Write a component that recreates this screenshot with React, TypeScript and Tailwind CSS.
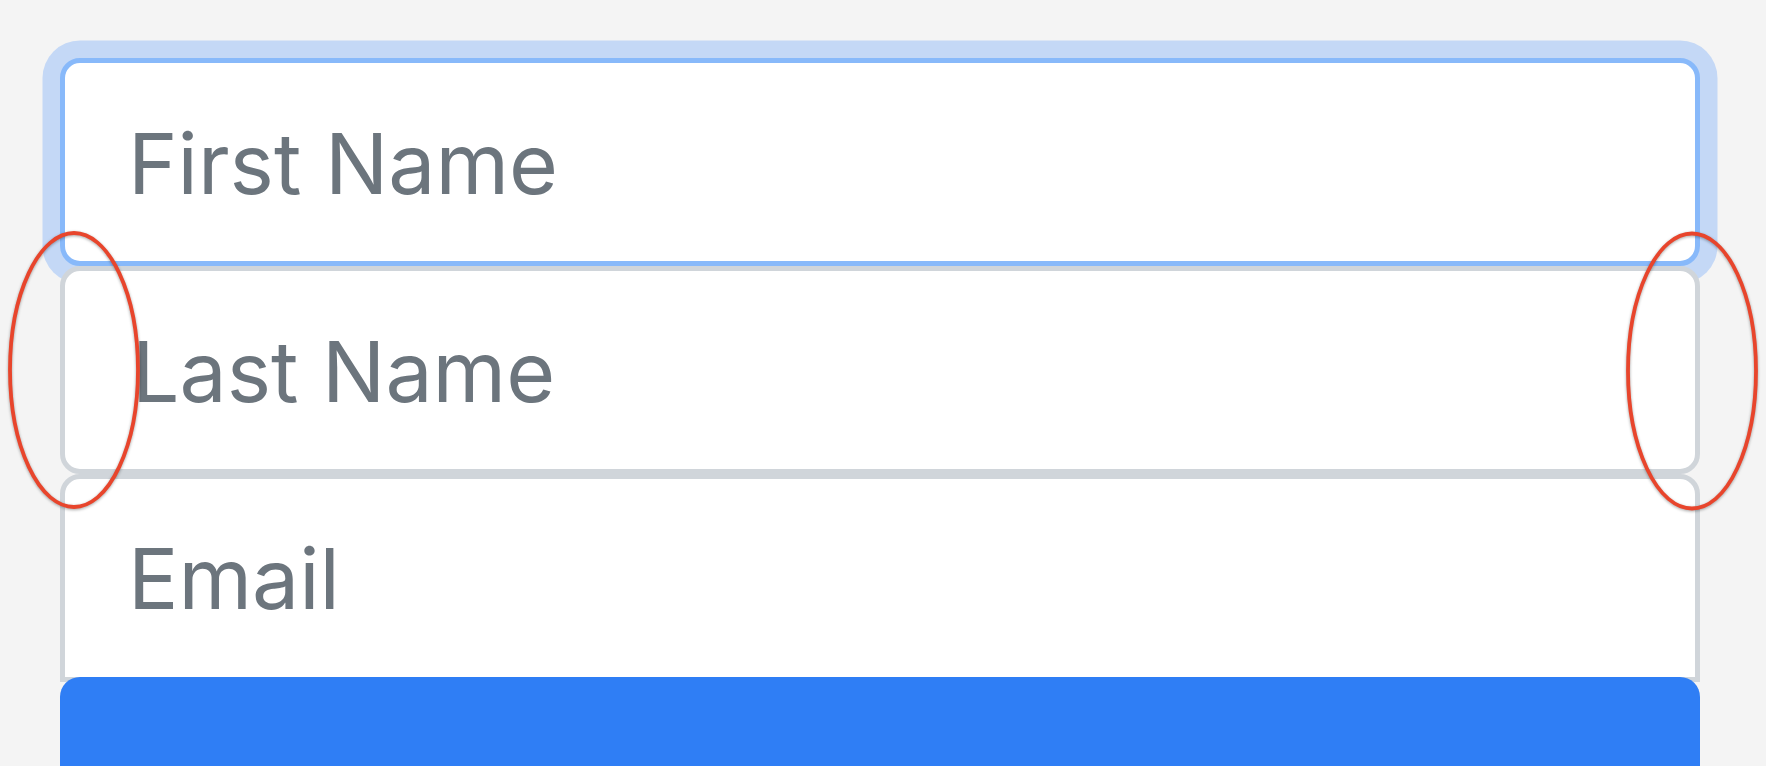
import React from "react";

const font = { fontFamily: "Inter, Roboto, 'Noto Sans', 'Liberation Sans', sans-serif" };

export default function App() {
  return (
    <div
      className="relative h-screen w-full overflow-hidden bg-[#f4f4f4]"
      style={font}
    >
      <div className="ml-[60px] flex w-[1640px] flex-col pt-[58.3px]">
        <div className="h-[208px] rounded-[20px] border-[5.5px] border-[#88b9fa] bg-white pl-[63px] pt-[58.4px] shadow-[0_0_0_17.5px_#c4d8f6]">
          <div className="text-[84px] leading-none text-[#6c757d]">First Name</div>
        </div>
        <div className="h-[208px] rounded-[20px] border-[5.5px] border-[#d0d5da] bg-white pl-[67px] pt-[58.4px]">
          <div className="text-[84px] leading-none text-[#6c757d]">Last Name</div>
        </div>
        <div className="h-[208px] rounded-t-[20px] border-[5.5px] border-[#d0d5da] bg-white pl-[63px] pt-[58px]">
          <div className="text-[84px] leading-none text-[#6c757d]">Email</div>
        </div>
        <div className="-mt-[5.5px] h-[200px] rounded-t-[20px] bg-[#2f7ef5] pt-[80px] text-center">
          <div className="text-[105px] leading-none text-white">Sign in</div>
        </div>
      </div>

      <svg
        className="pointer-events-none absolute left-0 top-0"
        width="1766"
        height="766"
        style={{ filter: "drop-shadow(0 1.5px 1.5px rgba(0,0,0,0.35))" }}
      >
        <ellipse cx="74" cy="370" rx="64" ry="137" fill="none" stroke="#e8452c" strokeWidth="3.8" />
        <ellipse cx="1692" cy="371" rx="64" ry="137.5" fill="none" stroke="#e8452c" strokeWidth="3.8" />
      </svg>
    </div>
  );
}
